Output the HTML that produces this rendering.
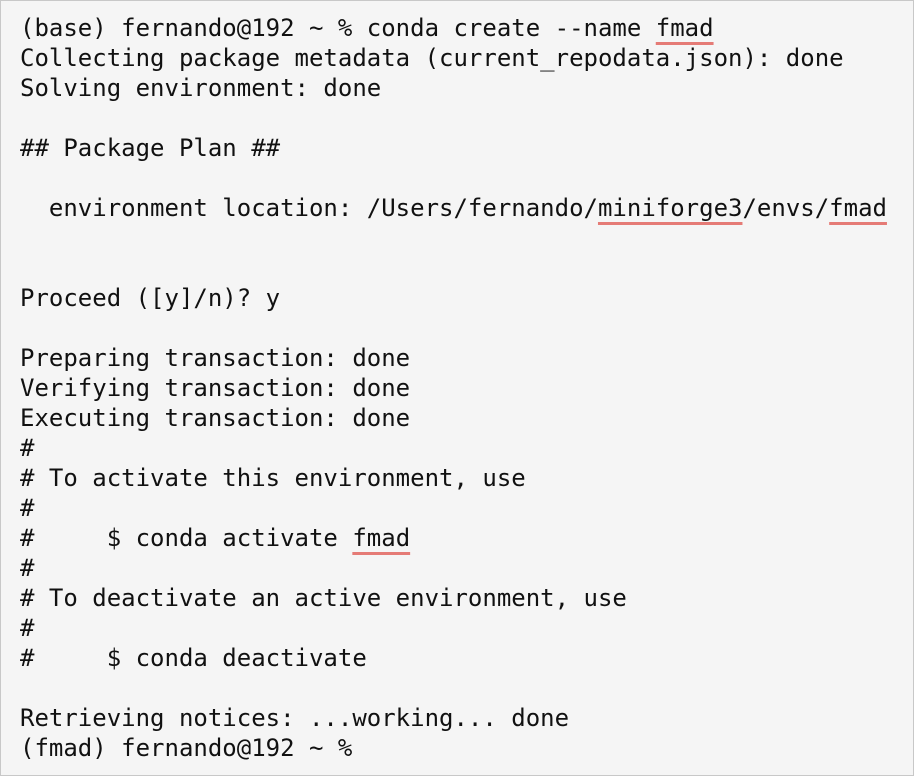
<!DOCTYPE html>
<html><head><meta charset="utf-8"><style>
html,body{margin:0;padding:0;}
body{width:914px;height:776px;overflow:hidden;background:#f5f5f5;box-sizing:border-box;border:1px solid #c8c8c8;}
pre{margin:0;position:absolute;left:20px;top:13px;font-family:"DejaVu Sans Mono","Liberation Mono",monospace;font-size:24px;line-height:30px;color:#111;}
u{text-decoration:underline;text-decoration-color:#e57b76;text-decoration-thickness:3px;text-underline-offset:6px;}
</style></head><body><pre>(base) fernando@192 ~ % conda create --name <u>fmad</u>
Collecting package metadata (current_repodata.json): done
Solving environment: done

## Package Plan ##

  environment location: /Users/fernando/<u>miniforge3</u>/envs/<u>fmad</u>


Proceed ([y]/n)? y

Preparing transaction: done
Verifying transaction: done
Executing transaction: done
#
# To activate this environment, use
#
#     $ conda activate <u>fmad</u>
#
# To deactivate an active environment, use
#
#     $ conda deactivate

Retrieving notices: ...working... done
(fmad) fernando@192 ~ %</pre></body></html>
